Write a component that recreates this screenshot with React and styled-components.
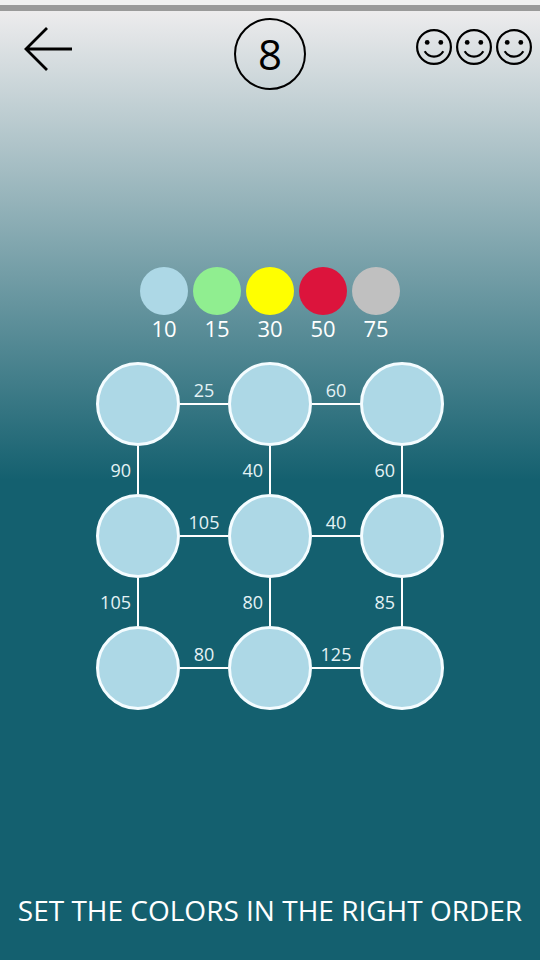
import React, { useState } from "react";
import styled, { createGlobalStyle } from "styled-components";

const GlobalStyle = createGlobalStyle`
  *, *::before, *::after { box-sizing: border-box; }
  body {
    margin: 0;
    font-family: "Open Sans", "Noto Sans", sans-serif;
  }
`;

const Page = styled.main`
  display: flex;
  flex-direction: column;
  min-height: 100vh;
  color: #ffffff;
  background: linear-gradient(to bottom, #f2eff0 0%, #14606f 50%);
`;

const StatusStrip = styled.div`
  height: 11px;
  background: #9a9a9a;
  border-top: 5px solid #f0f0f0;
`;

const Header = styled.header`
  display: grid;
  grid-template-columns: 1fr auto 1fr;
  align-items: start;
  padding: 7px 8px 0;
`;

const BackButton = styled.button`
  justify-self: start;
  display: flex;
  margin: 7px 0 0 16px;
  padding: 0;
  border: 0;
  background: none;
  color: #000000;
  cursor: pointer;
`;

const LevelBadge = styled.h1`
  display: flex;
  align-items: center;
  justify-content: center;
  width: 72px;
  height: 72px;
  margin: 0;
  border: 2px solid #000000;
  border-radius: 50%;
  color: #000000;
  font-size: 42px;
  font-weight: 400;
  line-height: 1;
`;

const Rating = styled.div`
  justify-self: end;
  display: flex;
  gap: 4px;
  margin-top: 11px;
  color: #000000;
`;

const Puzzle = styled.section`
  flex: 1;
  display: flex;
  flex-direction: column;
  align-items: center;
  justify-content: center;
  gap: 20px;
  padding-bottom: 4px;
`;

const Legend = styled.ul`
  display: flex;
  gap: 5px;
  margin: 0;
  padding: 0;
  list-style: none;
`;

const LegendItem = styled.li`
  width: 48px;
  font-size: 22px;
  line-height: 27px;
  text-align: center;
`;

const Swatch = styled.div`
  width: 48px;
  height: 48px;
  border-radius: 50%;
  background: ${({ $color }) => $color};
`;

const Board = styled.div`
  display: grid;
  grid-template-columns: 84px 48px 84px 48px 84px;
  grid-template-rows: 84px 48px 84px 48px 84px;
`;

const Node = styled.button`
  padding: 0;
  border: 3px solid #f4fcff;
  border-radius: 50%;
  background: ${({ $color }) => $color};
  cursor: pointer;
`;

const Across = styled.div`
  align-self: center;
  height: 42px;
  margin-top: -40px;
  border-bottom: 2px solid #ffffff;
  padding-top: 15px;
  color: #e4f2f5;
  font-size: 18px;
  line-height: 24px;
  text-align: center;
  white-space: nowrap;
`;

const Down = styled.div`
  display: flex;
  align-items: center;
  justify-content: flex-end;
  width: 43px;
  padding-right: 6px;
  border-right: 2px solid #ffffff;
  color: #e4f2f5;
  font-size: 18px;
  line-height: 24px;
`;

const Hint = styled.p`
  margin: 0;
  padding: 0 8px 30px;
  font-size: 28px;
  line-height: 40px;
  text-align: center;
`;

const COLORS = [
  { name: "Light blue", color: "#add8e6", value: 10 },
  { name: "Light green", color: "#90ee90", value: 15 },
  { name: "Yellow", color: "#ffff00", value: 30 },
  { name: "Crimson", color: "#dc143c", value: 50 },
  { name: "Silver", color: "#c0c0c0", value: 75 },
];

const ACROSS = [[25, 60], [105, 40], [80, 125]];
const DOWN = [[90, 40, 60], [105, 80, 85]];

function BackArrow() {
  return (
    <svg width="48" height="48" viewBox="0 0 48 48" fill="none" stroke="currentColor" strokeWidth="2.8" aria-hidden="true">
      <path d="M48 24H2M23 3 2 24l21 21" />
    </svg>
  );
}

function Smiley() {
  return (
    <svg width="36" height="36" viewBox="0 0 36 36" fill="none" stroke="currentColor" strokeWidth="2.2" aria-hidden="true">
      <circle cx="18" cy="18" r="16.9" />
      <circle cx="11.2" cy="13.4" r="2.4" fill="currentColor" stroke="none" />
      <circle cx="24.8" cy="13.4" r="2.4" fill="currentColor" stroke="none" />
      <path d="M8.7 22.3C13 29.4 23 29.4 27.3 22.3" />
    </svg>
  );
}

export default function App() {
  const [nodes, setNodes] = useState(Array(9).fill(0));
  const cycle = (index) =>
    setNodes((prev) => prev.map((c, i) => (i === index ? (c + 1) % COLORS.length : c)));

  const cells = [];
  for (let row = 0; row < 3; row++) {
    for (let col = 0; col < 3; col++) {
      const index = row * 3 + col;
      const { name, color } = COLORS[nodes[index]];
      cells.push(
        <Node
          key={`node-${index}`}
          $color={color}
          aria-label={`Row ${row + 1}, column ${col + 1}: ${name}`}
          onClick={() => cycle(index)}
        />
      );
      if (col < 2) cells.push(<Across key={`across-${index}`}>{ACROSS[row][col]}</Across>);
    }
    if (row < 2) {
      for (let col = 0; col < 3; col++) {
        cells.push(<Down key={`down-${row}-${col}`}>{DOWN[row][col]}</Down>);
        if (col < 2) cells.push(<span key={`gap-${row}-${col}`} />);
      }
    }
  }

  return (
    <>
      <GlobalStyle />
      <Page>
        <StatusStrip />
        <Header>
          <BackButton aria-label="Back">
            <BackArrow />
          </BackButton>
          <LevelBadge>8</LevelBadge>
          <Rating role="img" aria-label="Three smileys">
            <Smiley />
            <Smiley />
            <Smiley />
          </Rating>
        </Header>
        <Puzzle>
          <Legend>
            {COLORS.map(({ name, color, value }) => (
              <LegendItem key={name}>
                <Swatch $color={color} />
                {value}
              </LegendItem>
            ))}
          </Legend>
          <Board>{cells}</Board>
        </Puzzle>
        <Hint>SET THE COLORS IN THE RIGHT ORDER</Hint>
      </Page>
    </>
  );
}
